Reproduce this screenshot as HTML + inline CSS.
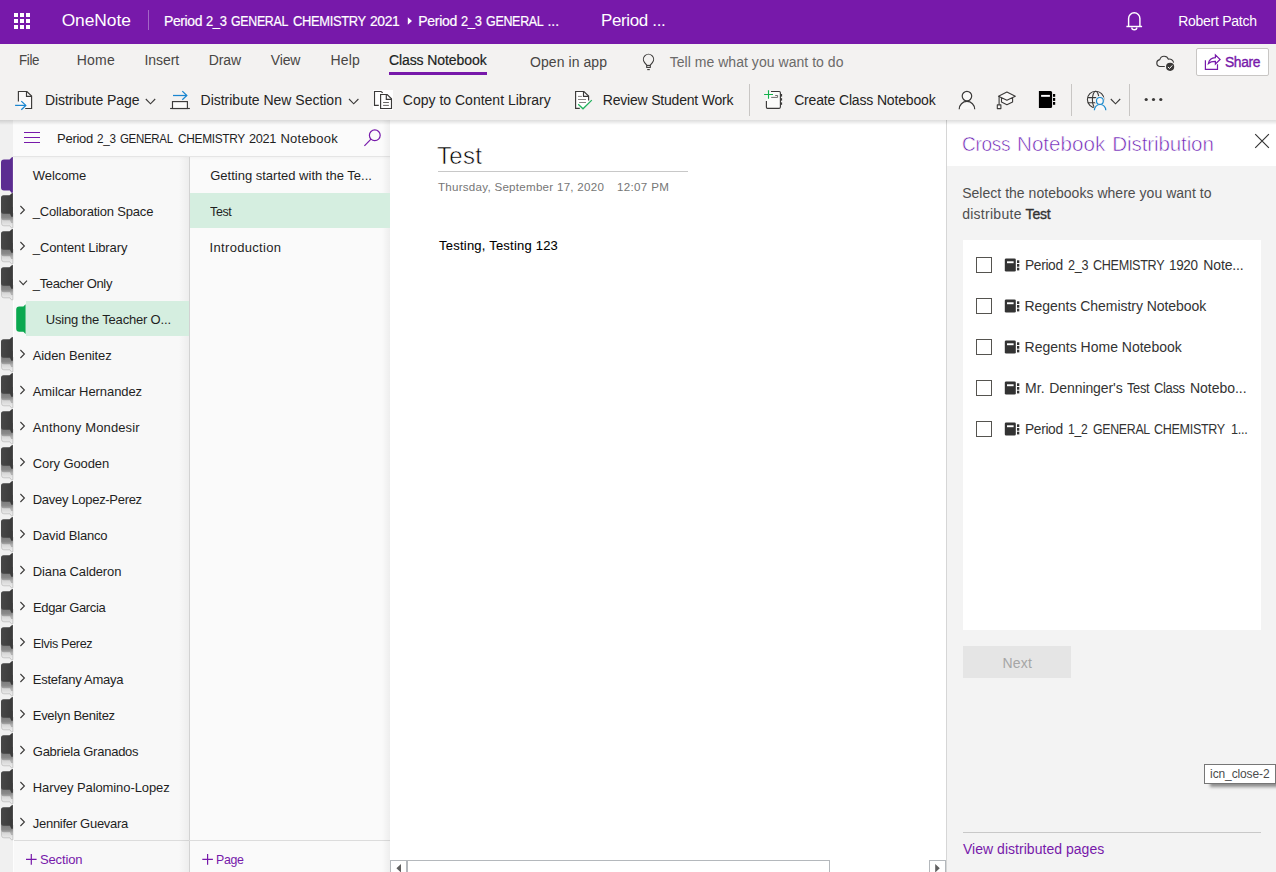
<!DOCTYPE html>
<html><head><meta charset="utf-8"><title>OneNote</title>
<style>
*{box-sizing:border-box;margin:0;padding:0}
html,body{width:1276px;height:872px;overflow:hidden;background:#fff;font-family:"Liberation Sans",sans-serif}
.a{position:absolute}
.t{position:absolute;white-space:pre;transform-origin:0 50%;font-family:"Liberation Sans",sans-serif}
svg{position:absolute;overflow:visible}
</style></head><body>
<!-- purple header -->
<div class="a" style="left:0;top:0;width:1276px;height:44px;background:#7719aa"></div>
<div class="a" style="left:148px;top:10px;width:1px;height:20px;background:#a466c6"></div>
<!-- tabs + ribbon bg -->
<div class="a" style="left:0;top:44px;width:1276px;height:76px;background:#f3f2f1"></div>
<div class="a" style="left:389px;top:72px;width:98px;height:3px;background:#7719aa"></div>
<!-- share button -->
<div class="a" style="left:1196px;top:48px;width:73px;height:28px;background:#fff;border:1px solid #c8c6c4;border-radius:2px"></div>
<!-- ribbon dividers -->
<div class="a" style="left:749px;top:84px;width:1px;height:32px;background:#c8c6c4"></div>
<div class="a" style="left:1071px;top:84px;width:1px;height:32px;background:#c8c6c4"></div>
<div class="a" style="left:1129px;top:84px;width:1px;height:32px;background:#c8c6c4"></div>
<!-- left strip -->
<div class="a" style="left:0;top:120px;width:13px;height:752px;background:#f0f0f0"></div>
<!-- nav -->
<div class="a" style="left:14px;top:120px;width:376px;height:752px;background:#fafafa"></div>
<div class="a" style="left:13px;top:120px;width:177px;height:752px;background:#f8f8f8;border-left:1px solid #fdfdfd"></div>
<div class="a" style="left:13px;top:120px;width:377px;height:37px;background:#fbfbfb;border-bottom:1px solid #e5e5e5"></div>
<div class="a" style="left:13px;top:157px;width:377px;height:3px;background:linear-gradient(rgba(0,0,0,0.025),rgba(0,0,0,0))"></div>
<div class="a" style="left:189px;top:157px;width:1px;height:715px;background:#d2d2d2"></div>
<div class="a" style="left:14px;top:840px;width:376px;height:1px;background:#dcdcdc"></div>
<div class="a" style="left:179px;top:157px;width:10px;height:715px;background:linear-gradient(to right,rgba(0,0,0,0),rgba(0,0,0,0.045))"></div>
<div class="a" style="left:382px;top:120px;width:8px;height:752px;background:linear-gradient(to right,rgba(0,0,0,0),rgba(0,0,0,0.05))"></div>
<!-- selected rows -->
<div class="a" style="left:26px;top:301px;width:163px;height:35px;background:#d5eee0"></div>
<div class="a" style="left:190px;top:193px;width:200px;height:35px;background:#d5eee0"></div>
<!-- canvas -->
<div class="a" style="left:390px;top:120px;width:556px;height:752px;background:#fff"></div>
<div class="a" style="left:438px;top:171px;width:250px;height:1px;background:#c8c8c8"></div>
<!-- right panel -->
<div class="a" style="left:946px;top:120px;width:330px;height:752px;background:#f3f3f3;border-left:1px solid #d6d6d6"></div>
<div class="a" style="left:947px;top:120px;width:329px;height:46px;background:#fff"></div>
<div class="a" style="left:963px;top:240px;width:298px;height:390px;background:#fff"></div>
<div class="a" style="left:963px;top:646px;width:108px;height:32px;background:#e5e5e5"></div>
<div class="a" style="left:963px;top:832px;width:298px;height:1px;background:#c8c8c8"></div>
<!-- tooltip -->
<div class="a" style="left:1204px;top:764px;width:72px;height:20px;background:#fff;border:1px solid #767676;box-shadow:5px 4px 3px -1px rgba(0,0,0,.42)"></div>
<!-- ribbon shadow -->
<div class="a" style="left:0;top:120px;width:1276px;height:5px;background:linear-gradient(#00000022,#00000000)"></div>
<svg width="1276" height="120" style="left:0;top:0" viewBox="0 0 1276 120" fill="none">
<!-- waffle -->
<g fill="#fff">
<rect x="14" y="13" width="4" height="4"/><rect x="20" y="13" width="4" height="4"/><rect x="26" y="13" width="4" height="4"/>
<rect x="14" y="19" width="4" height="4"/><rect x="20" y="19" width="4" height="4"/><rect x="26" y="19" width="4" height="4"/>
<rect x="14" y="25" width="4" height="4"/><rect x="20" y="25" width="4" height="4"/><rect x="26" y="25" width="4" height="4"/>
<path d="M407.8 17.3 L412 21 L407.8 24.7Z"/>
</g>
<!-- bell -->
<g stroke="#fff" stroke-width="1.45" fill="none">
<path d="M1128.6 26.3 V18.4 a5.65 5.65 0 0 1 11.3 0 V26.3"/>
<path d="M1126.4 26.5 H1142.1"/>
<path d="M1131.8 27.4 a2.5 2.3 0 0 0 5 0"/>
</g>
<!-- bulb -->
<g stroke="#3b3a39" stroke-width="1.1" fill="none">
<path d="M646.7 65.2 L644.6 62.6 A5.1 5.1 0 1 1 652.4 62.6 L650.3 65.2"/>
<rect x="646.7" y="65.4" width="3.6" height="2"/>
<path d="M647.2 69.6 H649.8"/>
</g>
<!-- cloud -->
<g stroke="#3b3a39" stroke-width="1.1" fill="none">
<path d="M1164.8 66.5 H1159.6 A3.5 3.5 0 0 1 1159.8 59.6 A4.5 4.5 0 0 1 1168.4 59.2 A4.2 4.2 0 0 1 1173.6 62.6"/>
</g>
<circle cx="1170.1" cy="66.8" r="4.1" fill="#3b3a39"/>
<path d="M1167.9 66.9 L1169.5 68.5 L1172.3 65.4" stroke="#fff" stroke-width="1" fill="none"/>
<!-- share icon -->
<g stroke="#7719aa" stroke-width="1.2" fill="none" stroke-linejoin="miter">
<path d="M1205.4 60.2 V69.4 H1217.5 V64.3"/>
<path d="M1208.4 63.6 C1209 60 1212 57.8 1215.4 57.6 V54.9 L1220.1 59.5 L1215.4 64 V61.4 C1212.4 61.3 1210 62 1208.4 63.6 Z"/>
</g>
<!-- RIBBON -->
<!-- distribute page -->
<path d="M18.4 91.5 H26.9 L31.6 96.1 V108.5 H18.4Z" fill="#faf9f9"/>
<g stroke="#3b3a39" stroke-width="1.15" fill="none">
<path d="M18.4 101.6 V91.5 H26.9 L31.6 96.1 V108.5 H25.2"/>
<path d="M26.5 91.5 V96.3 H31.6"/>
</g>
<g stroke="#1a86d0" stroke-width="1.25" fill="none">
<path d="M15.1 105.4 H25.6"/><path d="M21.3 101.1 L25.8 105.4 L21.3 109.8"/>
</g>
<!-- chevrons -->
<g stroke="#3b3a39" stroke-width="1.1" fill="none">
<path d="M145.8 99 L150.5 103.8 L155.2 99"/>
<path d="M349 99 L353.7 103.8 L358.4 99"/>
<path d="M1110.8 99 L1115.5 103.8 L1120.2 99"/>
</g>
<!-- distribute new section -->
<g stroke="#1a86d0" stroke-width="1.25" fill="none">
<path d="M173 95.5 H186.6"/><path d="M182.3 91.1 L186.8 95.5 L182.3 99.7"/>
</g>
<g stroke="#3b3a39" stroke-width="1.15" fill="none">
<path d="M170.1 108.5 H189.9"/>
<rect x="172.5" y="101.6" width="14.9" height="6.9" fill="#fbfbfa"/>
</g>
<!-- copy icon w/ white bg -->
<rect x="373" y="90" width="20" height="20" fill="#fff"/>
<g stroke="#3b3a39" stroke-width="1.15" fill="none">
<path d="M378.8 105.4 H374.5 V91.5 H381 L382.7 92.7"/>
<path d="M380.6 94.5 H387.2 L391.5 98.8 V108.5 H380.6 Z"/>
<path d="M386.3 94.5 V99.4 H391.5"/>
<path d="M383.1 102.5 H388.9 M383.1 105.4 H388.9" stroke-width="0.95" stroke="#605e5c"/>
</g>
<!-- review -->
<path d="M575.6 91.5 H583.9 L588.6 96 V104 L583 108.3 H575.6Z" fill="#fff"/>
<g stroke="#3b3a39" stroke-width="1.15" fill="none">
<path d="M579.8 108.3 H575.6 V91.5 H583.9 L588.6 96 V100.6"/>
<path d="M583.5 91.5 V96.3 H588.6"/>
</g>
<g stroke="#7a7876" stroke-width="0.9" fill="none">
<path d="M578 96.4 H581.9 M578 99.5 H586 M579.1 102.5 H586"/>
</g>
<path d="M578.2 104.3 L583 108.8 L591.8 100.1" stroke="#22b35e" stroke-width="1.3" fill="none"/>
<!-- create class notebook -->
<path d="M766.4 92 H779.4 a1 1 0 0 1 1 1 V107.3 a1 1 0 0 1 -1 1 H767.4 a1 1 0 0 1 -1 -1Z" fill="#fbfbfa"/>
<g stroke="#3b3a39" stroke-width="1.15" fill="none">
<path d="M766.4 100.9 V107.3 a1 1 0 0 0 1 1 H779.2 a1.2 1.2 0 0 0 1.2 -1.2 V92.7 a1.2 1.2 0 0 0 -1.2 -1.2 H771"/>
<path d="M771.2 97.4 H777.6 V95.5 H775.2" stroke-width="0.9" stroke="#605e5c"/>
</g>
<g fill="#3b3a39"><rect x="780.8" y="94" width="1.3" height="2.6"/><rect x="780.8" y="98.2" width="1.3" height="2.4"/><rect x="780.8" y="102.4" width="1.3" height="2.4"/></g>
<path d="M768.5 90.2 V98.8 M764.1 94.5 H773" stroke="#14b04c" stroke-width="1.15"/>
<!-- person -->
<g stroke="#3b3a39" stroke-width="1.2" fill="#f9f8f7">
<path d="M959.2 109.2 A7.75 7.75 0 0 1 974.7 109.2" />
<circle cx="966.95" cy="96.1" r="4.75"/>
</g>
<!-- grad cap -->
<g stroke="#3b3a39" stroke-width="1.1" fill="#f9f8f7" stroke-linejoin="round">
<path d="M1001.5 98.4 V102 L1006.9 104.7 L1012.6 102 V98.4Z"/>
<path d="M1006.9 92.1 L1015.3 96.2 L1006.9 100.2 L998.5 96.2 Z"/>
<path d="M999.1 96.4 V104.8" fill="none"/>
<rect x="997.3" y="104.9" width="3.6" height="3.7"/>
</g>
<!-- black notebook -->
<path d="M1038.9 90.9 H1050.6 a1.5 1.5 0 0 1 1.5 1.5 V106.6 a1.5 1.5 0 0 1 -1.5 1.5 H1038.9Z" fill="#000"/>
<rect x="1041.1" y="94.9" width="8.8" height="1.9" fill="#fff"/>
<rect x="1053" y="94" width="2.2" height="2.8" fill="#000"/><rect x="1053" y="98" width="2.2" height="2.9" fill="#000"/><rect x="1053" y="102" width="2.2" height="2.8" fill="#000"/>
<!-- globe + person -->
<g stroke="#3b3a39" stroke-width="1.1" fill="none">
<circle cx="1095.7" cy="99.6" r="8.3"/>
<ellipse cx="1095.7" cy="99.6" rx="3.3" ry="8.3"/>
<path d="M1087.8 97.6 H1103.6 M1087.8 102.7 H1103.6"/>
</g>
<g stroke="#f3f2f1" stroke-width="3.2" fill="#f3f2f1"><circle cx="1099.9" cy="100.9" r="3.4"/><path d="M1094.4 111 A5.7 5.7 0 0 1 1105.8 111Z"/><rect x="1097" y="104" width="10" height="8" stroke="none"/></g>
<g stroke="#1e8bcd" stroke-width="1.2" fill="#f8f8f8">
<circle cx="1099.9" cy="100.9" r="3.4"/>
<path d="M1094.4 110.2 A5.7 5.7 0 0 1 1105.8 110.2"/>
</g>
<!-- ellipsis -->
<g fill="#3b3a39"><circle cx="1146.2" cy="99.5" r="1.6"/><circle cx="1153.5" cy="99.5" r="1.6"/><circle cx="1160.8" cy="99.5" r="1.6"/></g>
</svg>
<svg width="1276" height="872" style="left:0;top:0" viewBox="0 0 1276 872" fill="none">
<defs><linearGradient id="gl" gradientUnits="userSpaceOnUse" x1="0" y1="27.3" x2="0" y2="33"><stop offset="0" stop-color="#d4d4d4"/><stop offset="1" stop-color="#eaeaea"/></linearGradient><linearGradient id="gm" gradientUnits="userSpaceOnUse" x1="0" y1="20.7" x2="0" y2="28"><stop offset="0" stop-color="#7e7e7e"/><stop offset="0.55" stop-color="#8a8a8a"/><stop offset="1" stop-color="#b0b0b0"/></linearGradient><linearGradient id="gd" gradientUnits="userSpaceOnUse" x1="1" y1="0" x2="13" y2="0"><stop offset="0" stop-color="#474747"/><stop offset="1" stop-color="#3a3a3a"/></linearGradient></defs>
<path d="M24 132.5 H40 M24 137.5 H40 M24 142.5 H40" stroke="#7719aa" stroke-width="1.1"/>
<g stroke="#7719aa" stroke-width="1.2"><circle cx="374.8" cy="135.3" r="5.4"/><path d="M371 139.2 L364.4 145.8"/></g>
<path d="M12.9 157 L11.8 157.2 L9.6 159.6 H4 a3 3 0 0 0 -3 3 V187.4 a3 3 0 0 0 3 3 H9.8 L11.4 192.8 H12.9 Z" fill="#5c2d91"/>
<g transform="translate(0,193)"><path d="M12.9 20 V34.8 H11.3 L10 32.8 H3.9 a2.4 2.4 0 0 1 -2.4 -2.4 V20 Z" fill="url(#gl)" stroke="#b9b9b9" stroke-width="0.7"/><path d="M12.9 14 V30 H11.3 L10 27.3 H3.6 a2.4 2.4 0 0 1 -2.4 -2.4 V14 Z" fill="url(#gm)"/><path d="M12.9 0 L11.8 0.2 L9.6 2.3 H3.5 a2.5 2.5 0 0 0 -2.5 2.5 V18.2 a2.5 2.5 0 0 0 2.5 2.5 H10 L11.3 23.7 H12.9 Z" fill="url(#gd)"/></g>
<g transform="translate(0,229)"><path d="M12.9 20 V34.8 H11.3 L10 32.8 H3.9 a2.4 2.4 0 0 1 -2.4 -2.4 V20 Z" fill="url(#gl)" stroke="#b9b9b9" stroke-width="0.7"/><path d="M12.9 14 V30 H11.3 L10 27.3 H3.6 a2.4 2.4 0 0 1 -2.4 -2.4 V14 Z" fill="url(#gm)"/><path d="M12.9 0 L11.8 0.2 L9.6 2.3 H3.5 a2.5 2.5 0 0 0 -2.5 2.5 V18.2 a2.5 2.5 0 0 0 2.5 2.5 H10 L11.3 23.7 H12.9 Z" fill="url(#gd)"/></g>
<g transform="translate(0,265)"><path d="M12.9 20 V34.8 H11.3 L10 32.8 H3.9 a2.4 2.4 0 0 1 -2.4 -2.4 V20 Z" fill="url(#gl)" stroke="#b9b9b9" stroke-width="0.7"/><path d="M12.9 14 V30 H11.3 L10 27.3 H3.6 a2.4 2.4 0 0 1 -2.4 -2.4 V14 Z" fill="url(#gm)"/><path d="M12.9 0 L11.8 0.2 L9.6 2.3 H3.5 a2.5 2.5 0 0 0 -2.5 2.5 V18.2 a2.5 2.5 0 0 0 2.5 2.5 H10 L11.3 23.7 H12.9 Z" fill="url(#gd)"/></g>
<g transform="translate(0,337)"><path d="M12.9 20 V34.8 H11.3 L10 32.8 H3.9 a2.4 2.4 0 0 1 -2.4 -2.4 V20 Z" fill="url(#gl)" stroke="#b9b9b9" stroke-width="0.7"/><path d="M12.9 14 V30 H11.3 L10 27.3 H3.6 a2.4 2.4 0 0 1 -2.4 -2.4 V14 Z" fill="url(#gm)"/><path d="M12.9 0 L11.8 0.2 L9.6 2.3 H3.5 a2.5 2.5 0 0 0 -2.5 2.5 V18.2 a2.5 2.5 0 0 0 2.5 2.5 H10 L11.3 23.7 H12.9 Z" fill="url(#gd)"/></g>
<g transform="translate(0,373)"><path d="M12.9 20 V34.8 H11.3 L10 32.8 H3.9 a2.4 2.4 0 0 1 -2.4 -2.4 V20 Z" fill="url(#gl)" stroke="#b9b9b9" stroke-width="0.7"/><path d="M12.9 14 V30 H11.3 L10 27.3 H3.6 a2.4 2.4 0 0 1 -2.4 -2.4 V14 Z" fill="url(#gm)"/><path d="M12.9 0 L11.8 0.2 L9.6 2.3 H3.5 a2.5 2.5 0 0 0 -2.5 2.5 V18.2 a2.5 2.5 0 0 0 2.5 2.5 H10 L11.3 23.7 H12.9 Z" fill="url(#gd)"/></g>
<g transform="translate(0,409)"><path d="M12.9 20 V34.8 H11.3 L10 32.8 H3.9 a2.4 2.4 0 0 1 -2.4 -2.4 V20 Z" fill="url(#gl)" stroke="#b9b9b9" stroke-width="0.7"/><path d="M12.9 14 V30 H11.3 L10 27.3 H3.6 a2.4 2.4 0 0 1 -2.4 -2.4 V14 Z" fill="url(#gm)"/><path d="M12.9 0 L11.8 0.2 L9.6 2.3 H3.5 a2.5 2.5 0 0 0 -2.5 2.5 V18.2 a2.5 2.5 0 0 0 2.5 2.5 H10 L11.3 23.7 H12.9 Z" fill="url(#gd)"/></g>
<g transform="translate(0,445)"><path d="M12.9 20 V34.8 H11.3 L10 32.8 H3.9 a2.4 2.4 0 0 1 -2.4 -2.4 V20 Z" fill="url(#gl)" stroke="#b9b9b9" stroke-width="0.7"/><path d="M12.9 14 V30 H11.3 L10 27.3 H3.6 a2.4 2.4 0 0 1 -2.4 -2.4 V14 Z" fill="url(#gm)"/><path d="M12.9 0 L11.8 0.2 L9.6 2.3 H3.5 a2.5 2.5 0 0 0 -2.5 2.5 V18.2 a2.5 2.5 0 0 0 2.5 2.5 H10 L11.3 23.7 H12.9 Z" fill="url(#gd)"/></g>
<g transform="translate(0,481)"><path d="M12.9 20 V34.8 H11.3 L10 32.8 H3.9 a2.4 2.4 0 0 1 -2.4 -2.4 V20 Z" fill="url(#gl)" stroke="#b9b9b9" stroke-width="0.7"/><path d="M12.9 14 V30 H11.3 L10 27.3 H3.6 a2.4 2.4 0 0 1 -2.4 -2.4 V14 Z" fill="url(#gm)"/><path d="M12.9 0 L11.8 0.2 L9.6 2.3 H3.5 a2.5 2.5 0 0 0 -2.5 2.5 V18.2 a2.5 2.5 0 0 0 2.5 2.5 H10 L11.3 23.7 H12.9 Z" fill="url(#gd)"/></g>
<g transform="translate(0,517)"><path d="M12.9 20 V34.8 H11.3 L10 32.8 H3.9 a2.4 2.4 0 0 1 -2.4 -2.4 V20 Z" fill="url(#gl)" stroke="#b9b9b9" stroke-width="0.7"/><path d="M12.9 14 V30 H11.3 L10 27.3 H3.6 a2.4 2.4 0 0 1 -2.4 -2.4 V14 Z" fill="url(#gm)"/><path d="M12.9 0 L11.8 0.2 L9.6 2.3 H3.5 a2.5 2.5 0 0 0 -2.5 2.5 V18.2 a2.5 2.5 0 0 0 2.5 2.5 H10 L11.3 23.7 H12.9 Z" fill="url(#gd)"/></g>
<g transform="translate(0,553)"><path d="M12.9 20 V34.8 H11.3 L10 32.8 H3.9 a2.4 2.4 0 0 1 -2.4 -2.4 V20 Z" fill="url(#gl)" stroke="#b9b9b9" stroke-width="0.7"/><path d="M12.9 14 V30 H11.3 L10 27.3 H3.6 a2.4 2.4 0 0 1 -2.4 -2.4 V14 Z" fill="url(#gm)"/><path d="M12.9 0 L11.8 0.2 L9.6 2.3 H3.5 a2.5 2.5 0 0 0 -2.5 2.5 V18.2 a2.5 2.5 0 0 0 2.5 2.5 H10 L11.3 23.7 H12.9 Z" fill="url(#gd)"/></g>
<g transform="translate(0,589)"><path d="M12.9 20 V34.8 H11.3 L10 32.8 H3.9 a2.4 2.4 0 0 1 -2.4 -2.4 V20 Z" fill="url(#gl)" stroke="#b9b9b9" stroke-width="0.7"/><path d="M12.9 14 V30 H11.3 L10 27.3 H3.6 a2.4 2.4 0 0 1 -2.4 -2.4 V14 Z" fill="url(#gm)"/><path d="M12.9 0 L11.8 0.2 L9.6 2.3 H3.5 a2.5 2.5 0 0 0 -2.5 2.5 V18.2 a2.5 2.5 0 0 0 2.5 2.5 H10 L11.3 23.7 H12.9 Z" fill="url(#gd)"/></g>
<g transform="translate(0,625)"><path d="M12.9 20 V34.8 H11.3 L10 32.8 H3.9 a2.4 2.4 0 0 1 -2.4 -2.4 V20 Z" fill="url(#gl)" stroke="#b9b9b9" stroke-width="0.7"/><path d="M12.9 14 V30 H11.3 L10 27.3 H3.6 a2.4 2.4 0 0 1 -2.4 -2.4 V14 Z" fill="url(#gm)"/><path d="M12.9 0 L11.8 0.2 L9.6 2.3 H3.5 a2.5 2.5 0 0 0 -2.5 2.5 V18.2 a2.5 2.5 0 0 0 2.5 2.5 H10 L11.3 23.7 H12.9 Z" fill="url(#gd)"/></g>
<g transform="translate(0,661)"><path d="M12.9 20 V34.8 H11.3 L10 32.8 H3.9 a2.4 2.4 0 0 1 -2.4 -2.4 V20 Z" fill="url(#gl)" stroke="#b9b9b9" stroke-width="0.7"/><path d="M12.9 14 V30 H11.3 L10 27.3 H3.6 a2.4 2.4 0 0 1 -2.4 -2.4 V14 Z" fill="url(#gm)"/><path d="M12.9 0 L11.8 0.2 L9.6 2.3 H3.5 a2.5 2.5 0 0 0 -2.5 2.5 V18.2 a2.5 2.5 0 0 0 2.5 2.5 H10 L11.3 23.7 H12.9 Z" fill="url(#gd)"/></g>
<g transform="translate(0,697)"><path d="M12.9 20 V34.8 H11.3 L10 32.8 H3.9 a2.4 2.4 0 0 1 -2.4 -2.4 V20 Z" fill="url(#gl)" stroke="#b9b9b9" stroke-width="0.7"/><path d="M12.9 14 V30 H11.3 L10 27.3 H3.6 a2.4 2.4 0 0 1 -2.4 -2.4 V14 Z" fill="url(#gm)"/><path d="M12.9 0 L11.8 0.2 L9.6 2.3 H3.5 a2.5 2.5 0 0 0 -2.5 2.5 V18.2 a2.5 2.5 0 0 0 2.5 2.5 H10 L11.3 23.7 H12.9 Z" fill="url(#gd)"/></g>
<g transform="translate(0,733)"><path d="M12.9 20 V34.8 H11.3 L10 32.8 H3.9 a2.4 2.4 0 0 1 -2.4 -2.4 V20 Z" fill="url(#gl)" stroke="#b9b9b9" stroke-width="0.7"/><path d="M12.9 14 V30 H11.3 L10 27.3 H3.6 a2.4 2.4 0 0 1 -2.4 -2.4 V14 Z" fill="url(#gm)"/><path d="M12.9 0 L11.8 0.2 L9.6 2.3 H3.5 a2.5 2.5 0 0 0 -2.5 2.5 V18.2 a2.5 2.5 0 0 0 2.5 2.5 H10 L11.3 23.7 H12.9 Z" fill="url(#gd)"/></g>
<g transform="translate(0,769)"><path d="M12.9 20 V34.8 H11.3 L10 32.8 H3.9 a2.4 2.4 0 0 1 -2.4 -2.4 V20 Z" fill="url(#gl)" stroke="#b9b9b9" stroke-width="0.7"/><path d="M12.9 14 V30 H11.3 L10 27.3 H3.6 a2.4 2.4 0 0 1 -2.4 -2.4 V14 Z" fill="url(#gm)"/><path d="M12.9 0 L11.8 0.2 L9.6 2.3 H3.5 a2.5 2.5 0 0 0 -2.5 2.5 V18.2 a2.5 2.5 0 0 0 2.5 2.5 H10 L11.3 23.7 H12.9 Z" fill="url(#gd)"/></g>
<g transform="translate(0,805)"><path d="M12.9 20 V34.8 H11.3 L10 32.8 H3.9 a2.4 2.4 0 0 1 -2.4 -2.4 V20 Z" fill="url(#gl)" stroke="#b9b9b9" stroke-width="0.7"/><path d="M12.9 14 V30 H11.3 L10 27.3 H3.6 a2.4 2.4 0 0 1 -2.4 -2.4 V14 Z" fill="url(#gm)"/><path d="M12.9 0 L11.8 0.2 L9.6 2.3 H3.5 a2.5 2.5 0 0 0 -2.5 2.5 V18.2 a2.5 2.5 0 0 0 2.5 2.5 H10 L11.3 23.7 H12.9 Z" fill="url(#gd)"/></g>
<path d="M25.6 304.2 V334 L23.4 331.8 H19.4 a3.2 3.2 0 0 1 -3.2 -3.2 V309.6 a3.2 3.2 0 0 1 3.2 -3.2 H23.4 Z" fill="#0aa84f"/>
<g stroke="#3b3a39" stroke-width="1.1">
<path d="M20.4 206 L24.4 210 L20.4 214"/>
<path d="M20.4 242 L24.4 246 L20.4 250"/>
<path d="M20.4 350 L24.4 354 L20.4 358"/>
<path d="M20.4 386 L24.4 390 L20.4 394"/>
<path d="M20.4 422 L24.4 426 L20.4 430"/>
<path d="M20.4 458 L24.4 462 L20.4 466"/>
<path d="M20.4 494 L24.4 498 L20.4 502"/>
<path d="M20.4 530 L24.4 534 L20.4 538"/>
<path d="M20.4 566 L24.4 570 L20.4 574"/>
<path d="M20.4 602 L24.4 606 L20.4 610"/>
<path d="M20.4 638 L24.4 642 L20.4 646"/>
<path d="M20.4 674 L24.4 678 L20.4 682"/>
<path d="M20.4 710 L24.4 714 L20.4 718"/>
<path d="M20.4 746 L24.4 750 L20.4 754"/>
<path d="M20.4 782 L24.4 786 L20.4 790"/>
<path d="M20.4 818 L24.4 822 L20.4 826"/>
<path d="M19.4 280.6 L23.2 284.6 L27 280.6"/>
</g>
<path d="M31.3 854 V864.8 M26 859.4 H36.6 M207.6 854 V864.8 M202.3 859.4 H212.9" stroke="#7719aa" stroke-width="1.2"/>
<path d="M1255.2 134.1 L1268.9 147.8 M1268.9 134.1 L1255.2 147.8" stroke="#333" stroke-width="1.15"/>
<rect x="976.5" y="257.5" width="15" height="15" fill="#fff" stroke="#55534f" stroke-width="1"/>
<path d="M1004.8 259.7 a1.3 1.3 0 0 1 1.3 -1.3 H1014.5 a1.3 1.3 0 0 1 1.3 1.3 V270.3 a1.3 1.3 0 0 1 -1.3 1.3 H1006.1 a1.3 1.3 0 0 1 -1.3 -1.3Z" fill="#333"/>
<rect x="1007" y="261.3" width="6.6" height="1.9" fill="#fff"/>
<rect x="1017" y="260.3" width="2.3" height="2.7" fill="#333"/>
<rect x="1017" y="264" width="2.3" height="2.7" fill="#333"/>
<rect x="1017" y="267.7" width="2.3" height="2.7" fill="#333"/>
<rect x="976.5" y="298.5" width="15" height="15" fill="#fff" stroke="#55534f" stroke-width="1"/>
<path d="M1004.8 300.7 a1.3 1.3 0 0 1 1.3 -1.3 H1014.5 a1.3 1.3 0 0 1 1.3 1.3 V311.3 a1.3 1.3 0 0 1 -1.3 1.3 H1006.1 a1.3 1.3 0 0 1 -1.3 -1.3Z" fill="#333"/>
<rect x="1007" y="302.3" width="6.6" height="1.9" fill="#fff"/>
<rect x="1017" y="301.3" width="2.3" height="2.7" fill="#333"/>
<rect x="1017" y="305" width="2.3" height="2.7" fill="#333"/>
<rect x="1017" y="308.7" width="2.3" height="2.7" fill="#333"/>
<rect x="976.5" y="339.5" width="15" height="15" fill="#fff" stroke="#55534f" stroke-width="1"/>
<path d="M1004.8 341.7 a1.3 1.3 0 0 1 1.3 -1.3 H1014.5 a1.3 1.3 0 0 1 1.3 1.3 V352.3 a1.3 1.3 0 0 1 -1.3 1.3 H1006.1 a1.3 1.3 0 0 1 -1.3 -1.3Z" fill="#333"/>
<rect x="1007" y="343.3" width="6.6" height="1.9" fill="#fff"/>
<rect x="1017" y="342.3" width="2.3" height="2.7" fill="#333"/>
<rect x="1017" y="346" width="2.3" height="2.7" fill="#333"/>
<rect x="1017" y="349.7" width="2.3" height="2.7" fill="#333"/>
<rect x="976.5" y="380.5" width="15" height="15" fill="#fff" stroke="#55534f" stroke-width="1"/>
<path d="M1004.8 382.7 a1.3 1.3 0 0 1 1.3 -1.3 H1014.5 a1.3 1.3 0 0 1 1.3 1.3 V393.3 a1.3 1.3 0 0 1 -1.3 1.3 H1006.1 a1.3 1.3 0 0 1 -1.3 -1.3Z" fill="#333"/>
<rect x="1007" y="384.3" width="6.6" height="1.9" fill="#fff"/>
<rect x="1017" y="383.3" width="2.3" height="2.7" fill="#333"/>
<rect x="1017" y="387" width="2.3" height="2.7" fill="#333"/>
<rect x="1017" y="390.7" width="2.3" height="2.7" fill="#333"/>
<rect x="976.5" y="421.5" width="15" height="15" fill="#fff" stroke="#55534f" stroke-width="1"/>
<path d="M1004.8 423.7 a1.3 1.3 0 0 1 1.3 -1.3 H1014.5 a1.3 1.3 0 0 1 1.3 1.3 V434.3 a1.3 1.3 0 0 1 -1.3 1.3 H1006.1 a1.3 1.3 0 0 1 -1.3 -1.3Z" fill="#333"/>
<rect x="1007" y="425.3" width="6.6" height="1.9" fill="#fff"/>
<rect x="1017" y="424.3" width="2.3" height="2.7" fill="#333"/>
<rect x="1017" y="428" width="2.3" height="2.7" fill="#333"/>
<rect x="1017" y="431.7" width="2.3" height="2.7" fill="#333"/>
</svg>
<div class="a" style="left:390px;top:860px;width:17px;height:14px;background:#fff;border:1px solid #b4b8bc"></div>
<div class="a" style="left:407px;top:860px;width:423px;height:14px;background:#fff;border:1px solid #b4b8bc"></div>
<div class="a" style="left:929px;top:860px;width:17px;height:14px;background:#fff;border:1px solid #b4b8bc"></div>
<svg width="560" height="12" style="left:390px;top:860px" viewBox="390 860 560 12"><path d="M396.4 868.2 L401 864 V872.4Z M939.8 868.2 L935.2 864 V872.4Z" fill="#606060"/></svg>
<div class="t" style="left:61.64px;top:7.57px;font-size:17.4px;line-height:24px;color:#fff;letter-spacing:-0.065px;">OneNote</div>
<div class="t" style="left:163.75px;top:11.15px;font-size:14px;line-height:20px;color:#fff;letter-spacing:-0.350px;-webkit-text-stroke:0.2px #fff;transform:scaleX(0.9944);">Period</div>
<div class="t" style="left:206.35px;top:11.15px;font-size:14px;line-height:20px;color:#fff;letter-spacing:-0.350px;-webkit-text-stroke:0.2px #fff;transform:scaleX(0.9224);">2_3</div>
<div class="t" style="left:231.35px;top:11.15px;font-size:14px;line-height:20px;color:#fff;letter-spacing:-0.350px;-webkit-text-stroke:0.2px #fff;transform:scaleX(0.8840);">GENERAL</div>
<div class="t" style="left:293.15px;top:11.15px;font-size:14px;line-height:20px;color:#fff;letter-spacing:-0.350px;-webkit-text-stroke:0.2px #fff;transform:scaleX(0.9206);">CHEMISTRY</div>
<div class="t" style="left:370.05px;top:11.15px;font-size:14px;line-height:20px;color:#fff;letter-spacing:-0.350px;-webkit-text-stroke:0.2px #fff;transform:scaleX(0.9898);">2021</div>
<div class="t" style="left:418.25px;top:11.15px;font-size:14px;line-height:20px;color:#fff;letter-spacing:-0.294px;-webkit-text-stroke:0.2px #fff;">Period</div>
<div class="t" style="left:461.35px;top:11.15px;font-size:14px;line-height:20px;color:#fff;letter-spacing:-0.350px;-webkit-text-stroke:0.2px #fff;transform:scaleX(0.9179);">2_3</div>
<div class="t" style="left:485.95px;top:11.15px;font-size:14px;line-height:20px;color:#fff;letter-spacing:-0.350px;-webkit-text-stroke:0.2px #fff;transform:scaleX(0.8917);">GENERAL</div>
<div class="t" style="left:547.55px;top:11.15px;font-size:14px;line-height:20px;color:#fff;letter-spacing:-0.086px;-webkit-text-stroke:0.2px #fff;">...</div>
<div class="t" style="left:601.04px;top:7.57px;font-size:17.4px;line-height:24px;color:#fff;letter-spacing:-0.350px;transform:scaleX(0.9738);">Period ...</div>
<div class="t" style="left:1178.15px;top:11.15px;font-size:14px;line-height:20px;color:#fff;letter-spacing:-0.256px;">Robert Patch</div>
<div class="t" style="left:19.35px;top:50.15px;font-size:14px;line-height:20px;color:#484644;letter-spacing:-0.350px;transform:scaleX(0.9529);">File</div>
<div class="t" style="left:76.75px;top:50.15px;font-size:14px;line-height:20px;color:#484644;letter-spacing:0.214px;">Home</div>
<div class="t" style="left:144.45px;top:50.15px;font-size:14px;line-height:20px;color:#484644;letter-spacing:-0.063px;">Insert</div>
<div class="t" style="left:208.85px;top:50.15px;font-size:14px;line-height:20px;color:#484644;letter-spacing:-0.157px;">Draw</div>
<div class="t" style="left:270.75px;top:50.15px;font-size:14px;line-height:20px;color:#484644;letter-spacing:-0.131px;">View</div>
<div class="t" style="left:330.55px;top:50.15px;font-size:14px;line-height:20px;color:#484644;letter-spacing:0.134px;">Help</div>
<div class="t" style="left:388.95px;top:50.15px;font-size:14px;line-height:20px;color:#201f1e;letter-spacing:-0.087px;-webkit-text-stroke:0.2px #201f1e;">Class Notebook</div>
<div class="t" style="left:530.05px;top:52.15px;font-size:14px;line-height:20px;color:#484644;letter-spacing:0.060px;">Open in app</div>
<div class="t" style="left:669.65px;top:52.15px;font-size:14px;line-height:20px;color:#6b6a69;letter-spacing:0.040px;">Tell me what you want to do</div>
<div class="t" style="left:1224.95px;top:52.15px;font-size:14px;line-height:20px;color:#7719aa;letter-spacing:-0.350px;-webkit-text-stroke:0.35px #7719aa;transform:scaleX(0.9872);">Share</div>
<div class="t" style="left:45.05px;top:90.15px;font-size:14px;line-height:20px;color:#252423;letter-spacing:-0.094px;">Distribute Page</div>
<div class="t" style="left:200.55px;top:90.15px;font-size:14px;line-height:20px;color:#252423;letter-spacing:-0.011px;">Distribute New Section</div>
<div class="t" style="left:402.85px;top:90.15px;font-size:14px;line-height:20px;color:#252423;letter-spacing:0.002px;">Copy to Content Library</div>
<div class="t" style="left:602.85px;top:90.15px;font-size:14px;line-height:20px;color:#252423;letter-spacing:-0.209px;">Review Student Work</div>
<div class="t" style="left:794.15px;top:90.15px;font-size:14px;line-height:20px;color:#252423;letter-spacing:-0.157px;">Create Class Notebook</div>
<div class="t" style="left:57.08px;top:130.10px;font-size:13px;line-height:18px;color:#1f1f1f;letter-spacing:-0.288px;">Period</div>
<div class="t" style="left:97.28px;top:130.10px;font-size:13px;line-height:18px;color:#1f1f1f;letter-spacing:-0.350px;transform:scaleX(0.9016);">2_3</div>
<div class="t" style="left:120.08px;top:130.10px;font-size:13px;line-height:18px;color:#1f1f1f;letter-spacing:-0.350px;transform:scaleX(0.8833);">GENERAL</div>
<div class="t" style="left:177.68px;top:130.10px;font-size:13px;line-height:18px;color:#1f1f1f;letter-spacing:-0.350px;transform:scaleX(0.9144);">CHEMISTRY</div>
<div class="t" style="left:248.78px;top:130.10px;font-size:13px;line-height:18px;color:#1f1f1f;letter-spacing:-0.350px;transform:scaleX(0.9808);">2021</div>
<div class="t" style="left:280.48px;top:130.10px;font-size:13px;line-height:18px;color:#1f1f1f;letter-spacing:0.226px;">Notebook</div>
<div class="t" style="left:32.78px;top:166.50px;font-size:13px;line-height:18px;color:#1f1f1f;letter-spacing:-0.070px;">Welcome</div>
<div class="t" style="left:32.78px;top:202.50px;font-size:13px;line-height:18px;color:#1f1f1f;letter-spacing:-0.194px;">_Collaboration Space</div>
<div class="t" style="left:32.78px;top:238.50px;font-size:13px;line-height:18px;color:#1f1f1f;letter-spacing:-0.099px;">_Content Library</div>
<div class="t" style="left:32.78px;top:274.50px;font-size:13px;line-height:18px;color:#1f1f1f;letter-spacing:-0.349px;">_Teacher Only</div>
<div class="t" style="left:45.78px;top:310.50px;font-size:13px;line-height:18px;color:#1f1f1f;letter-spacing:-0.184px;">Using the Teacher O...</div>
<div class="t" style="left:32.78px;top:346.50px;font-size:13px;line-height:18px;color:#1f1f1f;letter-spacing:-0.108px;">Aiden Benitez</div>
<div class="t" style="left:32.78px;top:382.50px;font-size:13px;line-height:18px;color:#1f1f1f;letter-spacing:-0.076px;">Amilcar Hernandez</div>
<div class="t" style="left:32.78px;top:418.50px;font-size:13px;line-height:18px;color:#1f1f1f;letter-spacing:0.137px;">Anthony Mondesir</div>
<div class="t" style="left:32.78px;top:454.50px;font-size:13px;line-height:18px;color:#1f1f1f;letter-spacing:-0.089px;">Cory Gooden</div>
<div class="t" style="left:32.78px;top:490.50px;font-size:13px;line-height:18px;color:#1f1f1f;letter-spacing:-0.302px;">Davey Lopez-Perez</div>
<div class="t" style="left:32.78px;top:526.50px;font-size:13px;line-height:18px;color:#1f1f1f;letter-spacing:-0.161px;">David Blanco</div>
<div class="t" style="left:32.78px;top:562.50px;font-size:13px;line-height:18px;color:#1f1f1f;letter-spacing:-0.131px;">Diana Calderon</div>
<div class="t" style="left:32.78px;top:598.50px;font-size:13px;line-height:18px;color:#1f1f1f;letter-spacing:-0.350px;transform:scaleX(0.9985);">Edgar Garcia</div>
<div class="t" style="left:32.78px;top:634.50px;font-size:13px;line-height:18px;color:#1f1f1f;letter-spacing:-0.350px;transform:scaleX(0.9692);">Elvis Perez</div>
<div class="t" style="left:32.78px;top:670.50px;font-size:13px;line-height:18px;color:#1f1f1f;letter-spacing:-0.240px;">Estefany Amaya</div>
<div class="t" style="left:32.78px;top:706.50px;font-size:13px;line-height:18px;color:#1f1f1f;letter-spacing:-0.282px;">Evelyn Benitez</div>
<div class="t" style="left:32.78px;top:742.50px;font-size:13px;line-height:18px;color:#1f1f1f;letter-spacing:-0.251px;">Gabriela Granados</div>
<div class="t" style="left:32.78px;top:778.50px;font-size:13px;line-height:18px;color:#1f1f1f;letter-spacing:-0.090px;">Harvey Palomino-Lopez</div>
<div class="t" style="left:32.78px;top:814.50px;font-size:13px;line-height:18px;color:#1f1f1f;letter-spacing:-0.280px;">Jennifer Guevara</div>
<div class="t" style="left:210.18px;top:166.50px;font-size:13px;line-height:18px;color:#1f1f1f;letter-spacing:0.004px;">Getting started with the Te...</div>
<div class="t" style="left:209.88px;top:202.50px;font-size:13px;line-height:18px;color:#1f1f1f;letter-spacing:-0.350px;transform:scaleX(0.9580);">Test</div>
<div class="t" style="left:209.58px;top:238.50px;font-size:13px;line-height:18px;color:#1f1f1f;letter-spacing:0.318px;">Introduction</div>
<div class="t" style="left:39.98px;top:850.50px;font-size:13px;line-height:18px;color:#7719aa;letter-spacing:-0.140px;">Section</div>
<div class="t" style="left:216.18px;top:850.50px;font-size:13px;line-height:18px;color:#7719aa;letter-spacing:-0.350px;transform:scaleX(0.9492);">Page</div>
<div class="t" style="left:437.24px;top:140.06px;font-size:23.5px;line-height:33px;color:#000;letter-spacing:0.350px;-webkit-text-stroke:0.55px #fff;transform:scaleX(1.0193);">Test</div>
<div class="t" style="left:437.93px;top:178.98px;font-size:11.6px;line-height:16px;color:#767676;letter-spacing:0.258px;">Thursday, September 17, 2020</div>
<div class="t" style="left:616.93px;top:178.98px;font-size:11.6px;line-height:16px;color:#767676;letter-spacing:0.332px;">12:07 PM</div>
<div class="t" style="left:439.08px;top:236.50px;font-size:13px;line-height:18px;color:#000;letter-spacing:0.214px;-webkit-text-stroke:0.08px #000;">Testing, Testing 123</div>
<div class="t" style="left:962.14px;top:129.36px;font-size:20.6px;line-height:29px;color:#6c1fb4;letter-spacing:-0.350px;-webkit-text-stroke:0.6px #fff;transform:scaleX(0.9264);">Cross</div>
<div class="t" style="left:1017.04px;top:129.36px;font-size:20.6px;line-height:29px;color:#6c1fb4;letter-spacing:0.007px;-webkit-text-stroke:0.6px #fff;">Notebook</div>
<div class="t" style="left:1112.34px;top:129.36px;font-size:20.6px;line-height:29px;color:#6c1fb4;letter-spacing:-0.136px;-webkit-text-stroke:0.6px #fff;">Distribution</div>
<div class="t" style="left:962.15px;top:183.15px;font-size:14px;line-height:20px;color:#4e4e4e;letter-spacing:0.028px;">Select the notebooks where you want to</div>
<div class="t" style="left:962.15px;top:204.15px;font-size:14px;line-height:20px;color:#4e4e4e;letter-spacing:0.276px;">distribute</div>
<div class="t" style="left:1025.55px;top:204.15px;font-size:14px;line-height:20px;color:#333;letter-spacing:-0.162px;-webkit-text-stroke:0.35px #333;">Test</div>
<div class="t" style="left:1025.05px;top:255.15px;font-size:14px;line-height:20px;color:#333;letter-spacing:-0.350px;transform:scaleX(0.9840);">Period</div>
<div class="t" style="left:1067.65px;top:255.15px;font-size:14px;line-height:20px;color:#333;letter-spacing:-0.350px;transform:scaleX(0.9003);">2_3</div>
<div class="t" style="left:1092.55px;top:255.15px;font-size:14px;line-height:20px;color:#333;letter-spacing:-0.350px;transform:scaleX(0.9017);">CHEMISTRY</div>
<div class="t" style="left:1169.35px;top:255.15px;font-size:14px;line-height:20px;color:#333;letter-spacing:-0.350px;transform:scaleX(0.9633);">1920</div>
<div class="t" style="left:1203.35px;top:255.15px;font-size:14px;line-height:20px;color:#333;letter-spacing:-0.142px;">Note...</div>
<div class="t" style="left:1024.55px;top:296.15px;font-size:14px;line-height:20px;color:#333;letter-spacing:-0.043px;">Regents Chemistry Notebook</div>
<div class="t" style="left:1024.55px;top:337.15px;font-size:14px;line-height:20px;color:#333;letter-spacing:-0.000px;">Regents Home Notebook</div>
<div class="t" style="left:1025.05px;top:378.15px;font-size:14px;line-height:20px;color:#333;letter-spacing:0.123px;">Mr.</div>
<div class="t" style="left:1049.35px;top:378.15px;font-size:14px;line-height:20px;color:#333;letter-spacing:-0.098px;">Denninger's</div>
<div class="t" style="left:1127.15px;top:378.15px;font-size:14px;line-height:20px;color:#333;letter-spacing:-0.350px;transform:scaleX(0.9173);">Test</div>
<div class="t" style="left:1154.25px;top:378.15px;font-size:14px;line-height:20px;color:#333;letter-spacing:-0.350px;transform:scaleX(0.9252);">Class</div>
<div class="t" style="left:1189.95px;top:378.15px;font-size:14px;line-height:20px;color:#333;letter-spacing:-0.016px;">Notebo...</div>
<div class="t" style="left:1025.05px;top:419.15px;font-size:14px;line-height:20px;color:#333;letter-spacing:-0.350px;transform:scaleX(0.9840);">Period</div>
<div class="t" style="left:1068.35px;top:419.15px;font-size:14px;line-height:20px;color:#333;letter-spacing:-0.350px;transform:scaleX(0.8694);">1_2</div>
<div class="t" style="left:1092.55px;top:419.15px;font-size:14px;line-height:20px;color:#333;letter-spacing:-0.350px;transform:scaleX(0.8824);">GENERAL</div>
<div class="t" style="left:1154.25px;top:419.15px;font-size:14px;line-height:20px;color:#333;letter-spacing:-0.350px;transform:scaleX(0.8967);">CHEMISTRY</div>
<div class="t" style="left:1231.45px;top:419.15px;font-size:14px;line-height:20px;color:#333;letter-spacing:-0.350px;transform:scaleX(0.9067);">1...</div>
<div class="t" style="left:1002.55px;top:653.15px;font-size:14px;line-height:20px;color:#a6a6a6;letter-spacing:0.168px;">Next</div>
<div class="t" style="left:1210.11px;top:765.64px;font-size:12px;line-height:17px;color:#4c4c4c;letter-spacing:-0.123px;">icn_close-2</div>
<div class="t" style="left:962.95px;top:838.95px;font-size:14px;line-height:20px;color:#7719aa;letter-spacing:0.033px;">View distributed pages</div>
</body></html>
